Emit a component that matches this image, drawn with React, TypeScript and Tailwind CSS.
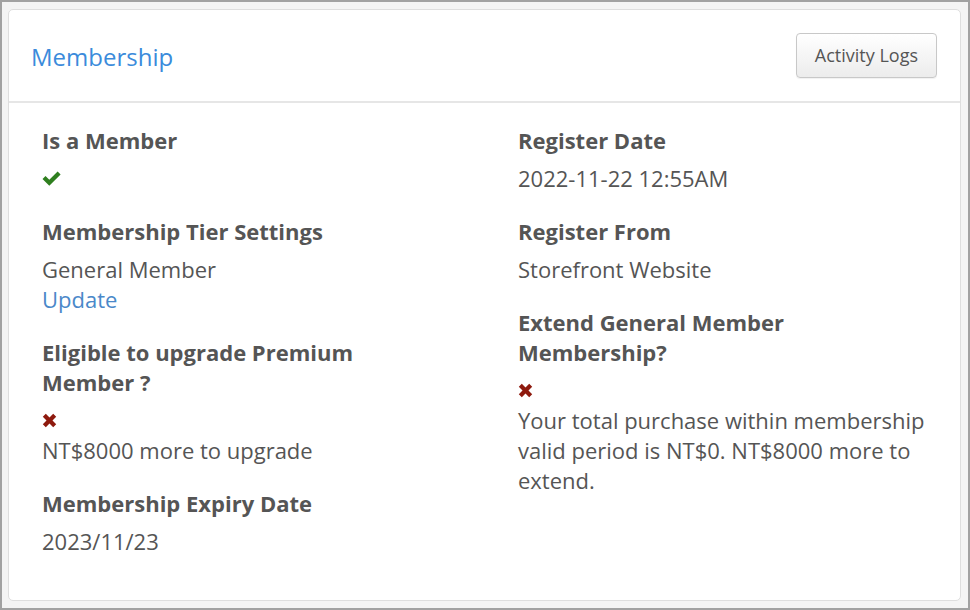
import React from 'react';

type Field = {
  label: string;
  values: React.ReactNode[];
};

const CheckIcon = () => (
  <svg width="20" height="15" viewBox="0 0 20 15" className="block">
    <path d="M0.5 8 L3.5 5 L7.3 8.8 L15.6 0.5 L18.6 3.5 L7.3 14.8 Z" fill="#2f7f1f" />
  </svg>
);

const CrossIcon = () => (
  <svg width="15" height="15" viewBox="0 0 15 15" className="block">
    <path
      d="M0.8 3.8 L3.8 0.8 L7.5 4.5 L11.2 0.8 L14.2 3.8 L10.5 7.5 L14.2 11.2 L11.2 14.2 L7.5 10.5 L3.8 14.2 L0.8 11.2 L4.5 7.5 Z"
      fill="#8e1a0e"
    />
  </svg>
);

const IconLine = ({ children }: { children: React.ReactNode }) => (
  <div className="h-[30px] flex items-center">{children}</div>
);

const leftFields: Field[] = [
  { label: 'Is a Member', values: [<IconLine key="i"><CheckIcon /></IconLine>] },
  {
    label: 'Membership Tier Settings',
    values: [
      <div key="t">General Member</div>,
      <a key="u" href="#" className="text-[#4a88c9]">Update</a>,
    ],
  },
  {
    label: 'Eligible to upgrade Premium Member ?',
    values: [<IconLine key="i"><CrossIcon /></IconLine>, <div key="t">NT$8000 more to upgrade</div>],
  },
  { label: 'Membership Expiry Date', values: [<div key="t">2023/11/23</div>] },
];

const rightFields: Field[] = [
  { label: 'Register Date', values: [<div key="t">2022-11-22 12:55AM</div>] },
  { label: 'Register From', values: [<div key="t">Storefront Website</div>] },
  {
    label: 'Extend General Member Membership?',
    values: [
      <IconLine key="i"><CrossIcon /></IconLine>,
      <div key="t">Your total purchase within membership valid period is NT$0. NT$8000 more to extend.</div>,
    ],
  },
];

const FieldBlock = ({ field }: { field: Field }) => (
  <div className="mb-[23px]">
    <div className="font-bold">{field.label}</div>
    <div className="mt-[8px]">{field.values}</div>
  </div>
);

export default function App() {
  return (
    <div
      className="w-[970px] h-[610px] flex border-2 border-[#a2a2a2] bg-[#f4f4f4] pt-[7px] pb-[7px] pl-[6px] pr-[7px]"
      style={{ fontFamily: '"Open Sans", "Liberation Sans", sans-serif' }}
    >
      <div className="flex-1 flex flex-col bg-white border border-[#dedede] rounded-[5px]">
        {/* panel header */}
        <div className="h-[93px] flex items-center justify-between pl-[22px] pr-[23px] border-b-2 border-[#e6e6e6]">
          <h2 className="text-[24px] text-[#3b8bdb] pt-[2px]">Membership</h2>
          <button className="h-[45px] px-[18px] text-[18px] text-[#555] border border-[#c8c8c8] rounded-[4px] bg-gradient-to-b from-white to-[#ececec] shadow-[0_1px_1px_rgba(0,0,0,0.06)]">
            Activity Logs
          </button>
        </div>

        {/* member details */}
        <div className="flex-1 grid grid-cols-[396px_420px] gap-x-[80px] pl-[33px] pt-[22px] text-[22px] leading-[30px] text-[#555]">
          <div>
            {leftFields.map((f) => (
              <FieldBlock key={f.label} field={f} />
            ))}
          </div>
          <div>
            {rightFields.map((f) => (
              <FieldBlock key={f.label} field={f} />
            ))}
          </div>
        </div>
      </div>
    </div>
  );
}
